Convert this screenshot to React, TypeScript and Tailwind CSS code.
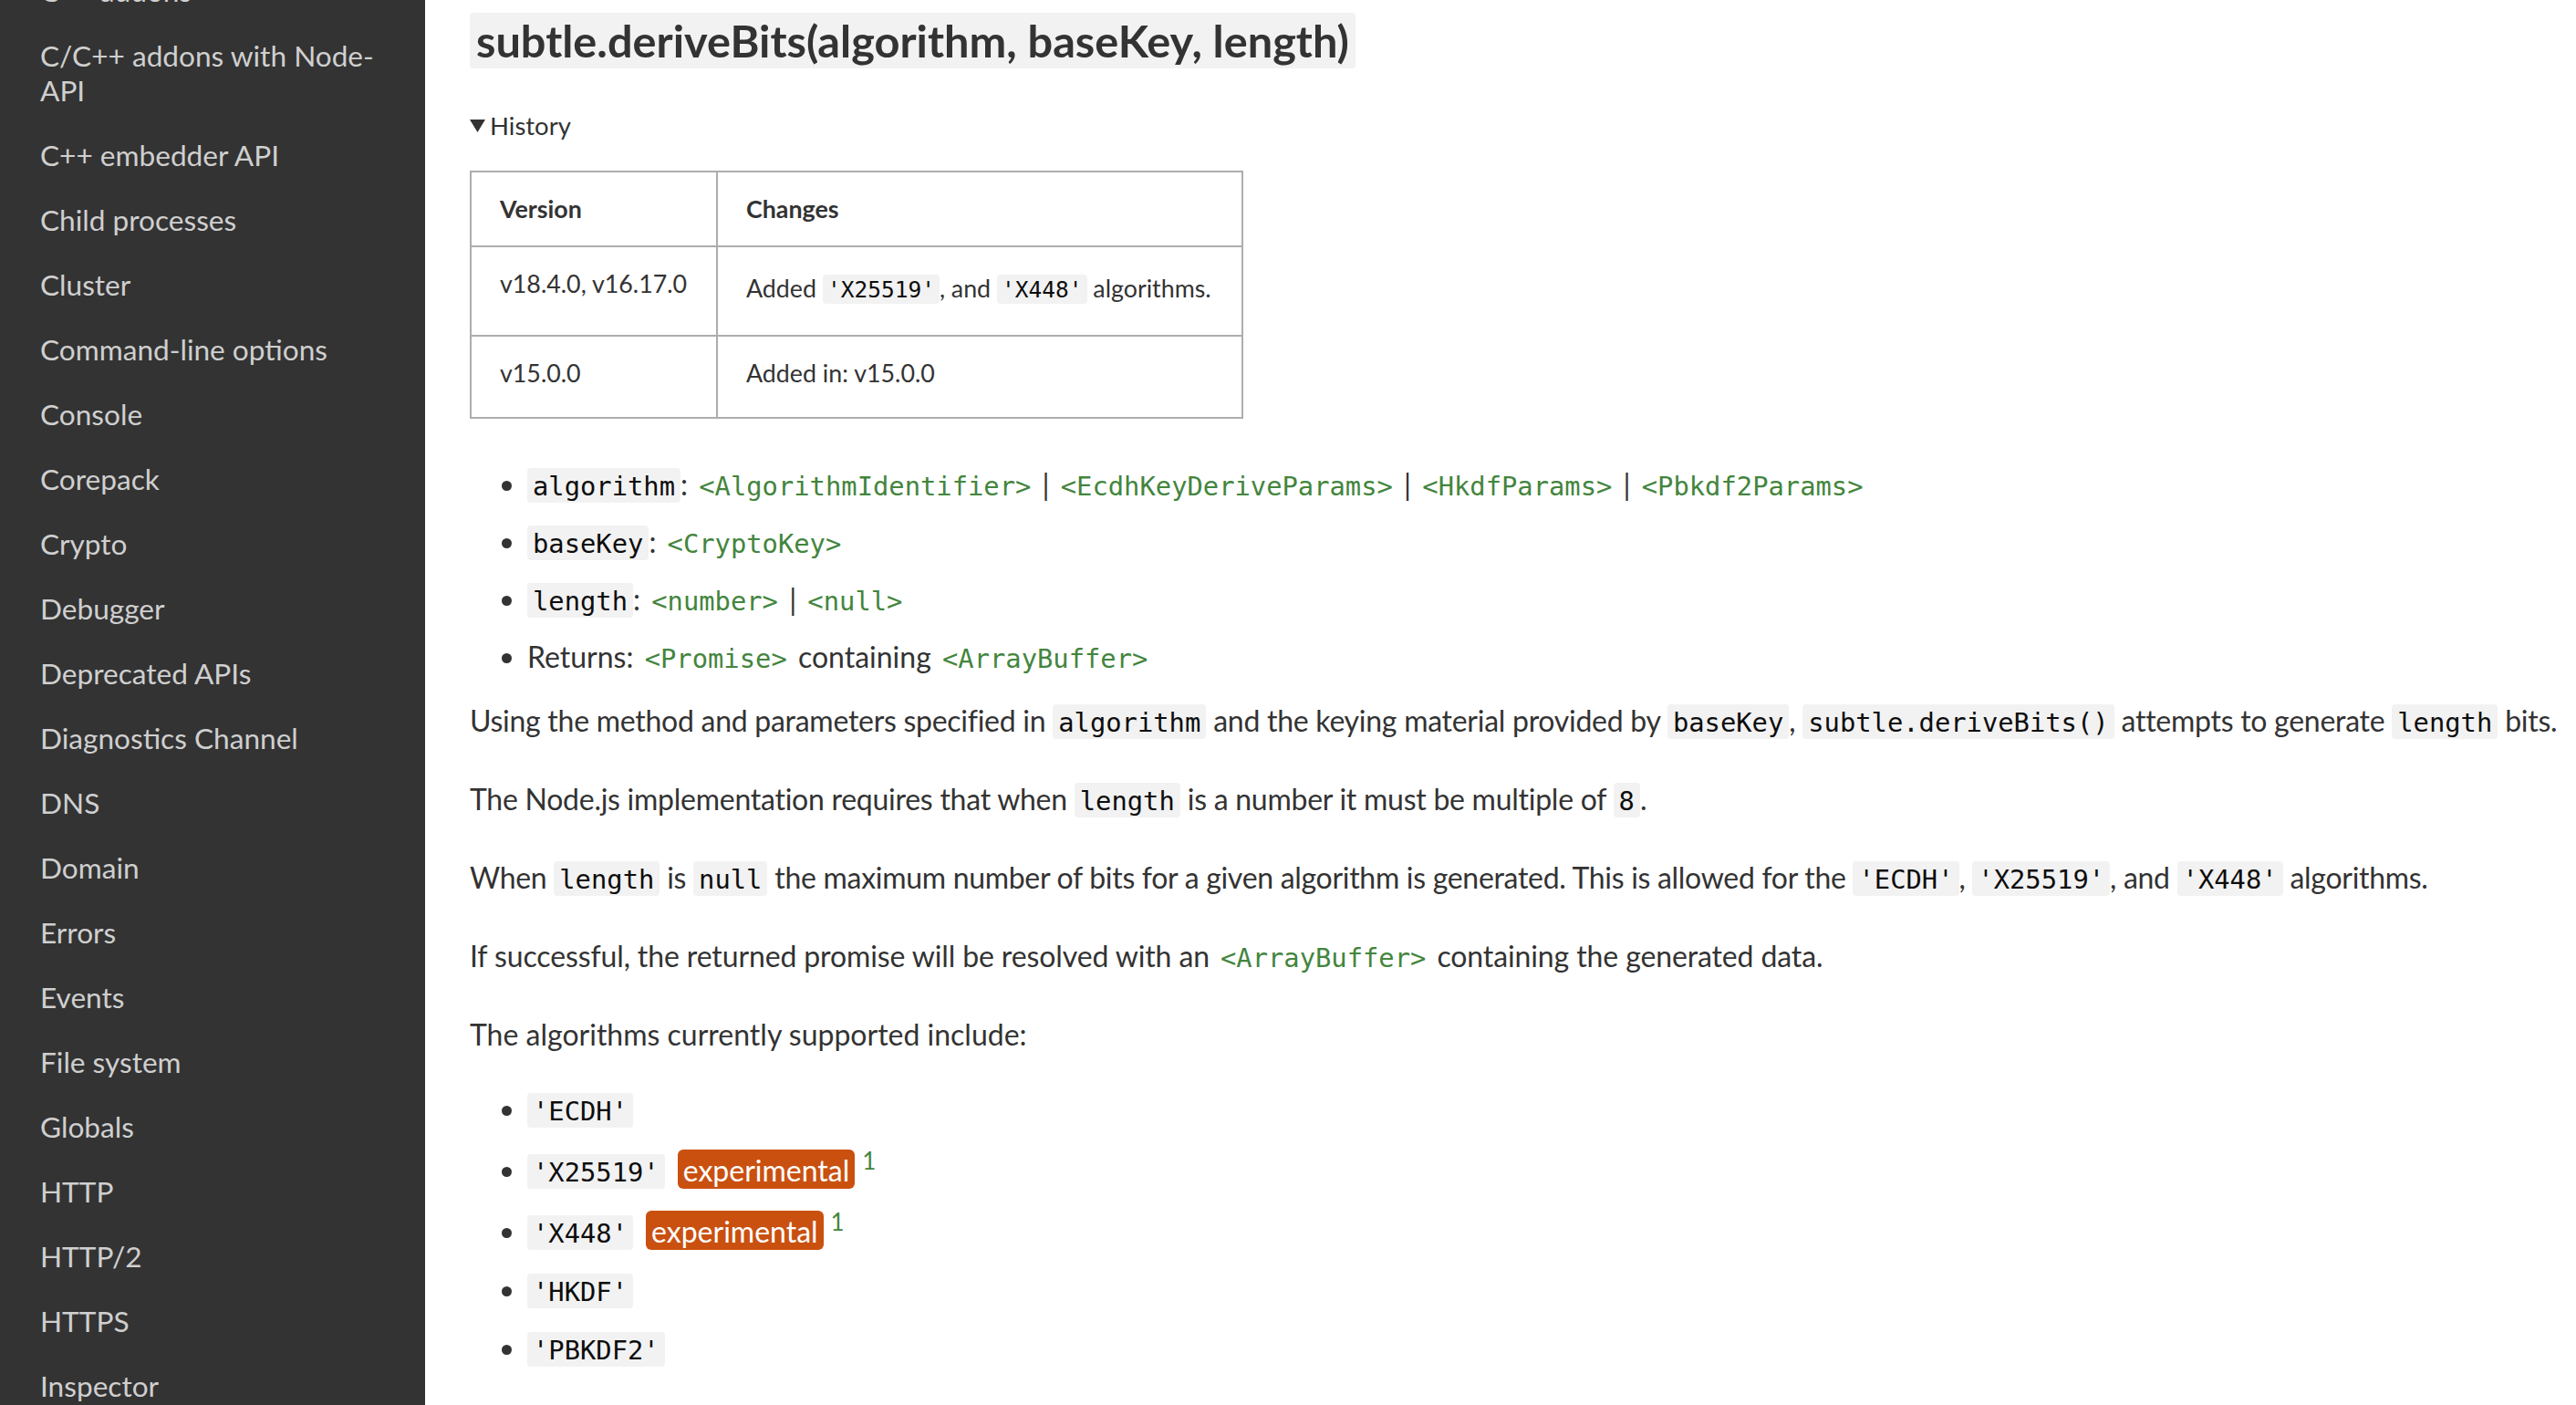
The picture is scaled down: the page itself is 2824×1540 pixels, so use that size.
import React from 'react';

const mono = "font-['DejaVu_Sans_Mono','Liberation_Mono',monospace]";

const navItems = [
  'C++ addons',
  'C/C++ addons with Node-|API',
  'C++ embedder API',
  'Child processes',
  'Cluster',
  'Command-line options',
  'Console',
  'Corepack',
  'Crypto',
  'Debugger',
  'Deprecated APIs',
  'Diagnostics Channel',
  'DNS',
  'Domain',
  'Errors',
  'Events',
  'File system',
  'Globals',
  'HTTP',
  'HTTP/2',
  'HTTPS',
  'Inspector',
  'Internationalization',
];

function Code({ children, small }: { children: React.ReactNode; small?: boolean }) {
  return (
    <code
      className={`${mono} tracking-normal bg-[#f2f2f2] text-[#0d0d0d] rounded-[4px] ${
        small
          ? 'text-[24.5px] leading-[30px] pt-[2px] pb-[1px] px-[5px]'
          : 'text-[28.8px] leading-[40px] pt-[3px] pb-[1px] px-[6px]'
      }`}
    >
      {children}
    </code>
  );
}

function Type({ name }: { name: string }) {
  return (
    <a className={`${mono} tracking-normal text-[28.8px] leading-[40px] px-[4px] text-[#43853d]`}>
      &lt;{name}&gt;
    </a>
  );
}

function Experimental() {
  return (
    <>
      <span className="ml-[14px] bg-[#ca5010] text-white rounded-[6px] px-[6px] pt-[3px] pb-[1px]">experimental</span>
      <span className="inline-block ml-[8px] text-[26px] leading-[25px] text-[#43853d] align-[13px]">1</span>
    </>
  );
}

export default function App() {
  return (
    <div className="flex w-[2824px] h-[1540px] overflow-hidden bg-white font-['Lato',sans-serif]">
      {/* Sidebar */}
      <nav className="w-[466px] shrink-0 h-[1540px] bg-[#333] overflow-hidden">
        <ul className="-mt-[29px] pl-[44px] pr-[30px]">
          {navItems.map((item) => {
            const [a, b] = item.split('|');
            return (
              <li key={item} className="mb-[33px] text-[31.6px] leading-[38px] text-[#cfcfcf] whitespace-nowrap">
                {a}
                {b && (
                  <>
                    <br />
                    {b}
                  </>
                )}
              </li>
            );
          })}
        </ul>
      </nav>

      {/* Content */}
      <main className="flex-1 pl-[49px] pt-[14px] text-[#333] text-[32px] leading-[48px]">
        <h3 className="w-fit bg-[#f2f2f2] rounded-[4px] px-[7px] text-[48.7px] font-bold leading-[61px]">
          subtle.deriveBits(algorithm, baseKey, length)
        </h3>

        <div className="mt-[43px] flex items-center text-[27.5px] leading-[39px]">
          <svg width="17" height="14" viewBox="0 0 17 14">
            <polygon points="0,0 17,0 8.5,14" fill="#333" />
          </svg>
          <span className="ml-[5px]">History</span>
        </div>

        {/* History table */}
        <div className="mt-[30px] w-[848px] border-2 border-[#adadad] text-[26.8px] leading-[42px]">
          <div className="flex h-[80px] font-bold">
            <div className="w-[268px] pl-[31px] pt-[19px]">Version</div>
            <div className="flex-1 border-l-2 border-[#adadad] pl-[31px] pt-[19px]">Changes</div>
          </div>
          <div className="flex h-[98px] border-t-2 border-[#adadad]">
            <div className="w-[268px] pl-[31px] pt-[19px]">v18.4.0, v16.17.0</div>
            <div className="flex-1 border-l-2 border-[#adadad] pl-[31px] pt-[24px]">
              Added <Code small>'X25519'</Code>, and <Code small>'X448'</Code> algorithms.
            </div>
          </div>
          <div className="flex h-[90px] border-t-2 border-[#adadad]">
            <div className="w-[268px] pl-[31px] pt-[19px]">v15.0.0</div>
            <div className="flex-1 border-l-2 border-[#adadad] pl-[31px] pt-[19px]">Added in: v15.0.0</div>
          </div>
        </div>

        {/* Parameters */}
        <ul className="mt-[48px] mb-[22px] pl-[63px] list-disc whitespace-nowrap">
          <li className="mb-[15px]">
            <Code>algorithm</Code>: <Type name="AlgorithmIdentifier" /> | <Type name="EcdhKeyDeriveParams" /> |{' '}
            <Type name="HkdfParams" /> | <Type name="Pbkdf2Params" />
          </li>
          <li className="mb-[15px]">
            <Code>baseKey</Code>: <Type name="CryptoKey" />
          </li>
          <li className="mb-[15px]">
            <Code>length</Code>: <Type name="number" /> | <Type name="null" />
          </li>
          <li>
            Returns: <Type name="Promise" /> containing <Type name="ArrayBuffer" />
          </li>
        </ul>

        <p className="mb-[38px] whitespace-nowrap tracking-[-0.27px]">
          Using the method and parameters specified in <Code>algorithm</Code> and the keying material provided by{' '}
          <Code>baseKey</Code>, <Code>subtle.deriveBits()</Code> attempts to generate <Code>length</Code> bits.
        </p>
        <p className="mb-[38px] whitespace-nowrap tracking-[-0.26px]">
          The Node.js implementation requires that when <Code>length</Code> is a number it must be multiple of{' '}
          <Code>8</Code>.
        </p>
        <p className="mb-[38px] whitespace-nowrap tracking-[-0.3px]">
          When <Code>length</Code> is <Code>null</Code> the maximum number of bits for a given algorithm is generated.
          This is allowed for the <Code>'ECDH'</Code>, <Code>'X25519'</Code>, and <Code>'X448'</Code> algorithms.
        </p>
        <p className="mb-[38px] whitespace-nowrap tracking-[-0.12px]">
          If successful, the returned promise will be resolved with an <Type name="ArrayBuffer" /> containing the
          generated data.
        </p>
        <p className="mb-[34px]">The algorithms currently supported include:</p>

        <ul className="pl-[63px] list-disc whitespace-nowrap">
          <li className="mb-[16px]">
            <Code>'ECDH'</Code>
          </li>
          <li className="mb-[16px] pt-[3px]">
            <Code>'X25519'</Code>
            <Experimental />
          </li>
          <li className="mb-[16px] pt-[3px]">
            <Code>'X448'</Code>
            <Experimental />
          </li>
          <li className="mb-[16px]">
            <Code>'HKDF'</Code>
          </li>
          <li className="mb-[16px]">
            <Code>'PBKDF2'</Code>
          </li>
        </ul>
      </main>
    </div>
  );
}
